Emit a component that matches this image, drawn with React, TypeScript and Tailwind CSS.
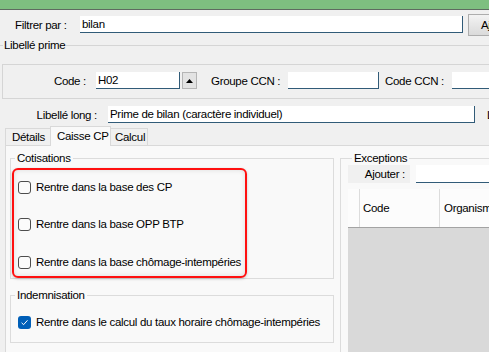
import React from "react";

function Check({ checked }: { checked?: boolean }) {
  if (checked) {
    return (
      <span className="flex h-[13px] w-[13px] shrink-0 items-center justify-center rounded-[3px] bg-[#005fb8]">
        <svg width="9" height="9" viewBox="0 0 9 9">
          <path d="M1.6 4.8 L3.6 6.7 L7.5 2.3" fill="none" stroke="#ffffff" strokeWidth="1" />
        </svg>
      </span>
    );
  }
  return <span className="h-[13px] w-[13px] shrink-0 rounded-[3px] border border-[#4d4d4d] bg-[#fbfbfb]" />;
}

function Field({ w, text }: { w: string; text?: string }) {
  return (
    <div className={`${w} h-[17px] shrink-0 border-b border-r border-[#315b78] bg-white pl-[2px] leading-[16px]`}>
      {text}
    </div>
  );
}

function Row({ label, checked }: { label: string; checked?: boolean }) {
  return (
    <div className="flex h-[14px] items-center gap-[5px]">
      <Check checked={checked} />
      <span className="whitespace-nowrap">{label}</span>
    </div>
  );
}

export default function App() {
  return (
    <div className="flex h-[352px] w-[489px] flex-col overflow-hidden bg-[#f0f0f0] font-['Liberation_Sans',Arial,sans-serif] text-[11.5px] leading-[14px] tracking-[-0.3px] text-black">
      <div className="flex w-[560px] flex-1 flex-col">
        {/* barre verte */}
        <div className="h-[10px] shrink-0 border-b border-[#5f6b60] bg-[#7ebf80]" />

        {/* filtre */}
        <div className="mt-[4px] flex h-[22px] shrink-0">
          <div className="w-[80px] self-center pl-[15px]">Filtrer par :</div>
          <div className="mt-[2px]">
            <Field w="w-[383px]" text="bilan" />
          </div>
          <div className="ml-[5px] h-[22px] w-[70px] border border-[#adadad] bg-gradient-to-b from-[#f3f3f3] to-[#dadada] pl-[12px] leading-[20px]">
            Ajouter
          </div>
        </div>

        {/* Libellé prime */}
        <div className="mt-[2px] flex h-[14px] shrink-0 items-center">
          <span className="h-px w-[3px] bg-[#d5d5d5]" />
          <span className="px-[1px]">Libellé prime</span>
          <span className="h-px flex-1 bg-[#d5d5d5]" />
        </div>

        <div className="ml-[2px] mt-[12px] h-[35px] shrink-0 border border-r-0 border-[#d5d5d5] pt-[7px]">
          <div className="flex items-center">
            <div className="w-[83px] text-right">Code :</div>
            <div className="ml-[10px]">
              <Field w="w-[84px]" text="H02" />
            </div>
            <div className="ml-[2px] flex h-[17px] w-[15px] items-center justify-center border border-[#b5b5b5] bg-[#e3e3e3]">
              <svg width="7" height="4" viewBox="0 0 7 4">
                <path d="M0 4 L3.5 0 L7 4 Z" fill="#000000" />
              </svg>
            </div>
            <div className="ml-[14px] w-[77px] whitespace-nowrap">Groupe CCN :</div>
            <Field w="w-[91px]" />
            <div className="ml-[6px] w-[67px] whitespace-nowrap">Code CCN :</div>
            <Field w="w-[90px]" />
          </div>
        </div>

        {/* Libellé long */}
        <div className="mt-[7px] flex shrink-0 items-center">
          <div className="w-[97px] text-right">Libellé long :</div>
          <div className="ml-[11px]">
            <Field w="w-[367px]" text="Prime de bilan (caractère individuel)" />
          </div>
          <div className="ml-[12px] whitespace-nowrap">Libellé court</div>
        </div>

        {/* onglets */}
        <div className="ml-[5px] mt-[3px] flex h-[19px] shrink-0 items-end">
          <div className="h-[17px] w-[45px] border-l border-t border-[#d9d9d9] pl-[6px] leading-[17px]">Détails</div>
          <div className="relative z-10 -mb-px h-[20px] w-[61px] border-x border-t border-[#d9d9d9] bg-[#f9f9f9] pl-[6px] leading-[19px]">
            Caisse CP
          </div>
          <div className="h-[17px] w-[37px] border-r border-t border-[#d9d9d9] pl-[4px] leading-[17px]">Calcul</div>
        </div>

        {/* panneau */}
        <div className="ml-[5px] flex flex-1 items-start border-l border-t border-[#d9d9d9] bg-[#f9f9f9] pl-[4px] pt-[5px]">
          <div className="flex w-[324px] shrink-0 flex-col">
            <fieldset className="border border-[#dcdcdc] pt-[3px]">
              <legend className="ml-[4px] px-[2px]">Cotisations</legend>
              <div className="ml-[1px] w-[235px] rounded-[6px] border-2 border-[#ff1010] pb-[7px] pl-[4px] pt-[10px] shadow-[inset_0_0_5px_rgba(0,0,0,0.12),0_1px_3px_rgba(0,0,0,0.2)]">
                <Row label="Rentre dans la base des CP" />
                <div className="mt-[23px]">
                  <Row label="Rentre dans la base OPP BTP" />
                </div>
                <div className="mt-[24px]">
                  <Row label="Rentre dans la base chômage-intempéries" />
                </div>
              </div>
            </fieldset>

            <fieldset className="mt-[9px] border border-[#dcdcdc] pb-[13px] pl-[7px] pt-[13px]">
              <legend className="ml-[-3px] px-[2px]">Indemnisation</legend>
              <Row label="Rentre dans le calcul du taux horaire chômage-intempéries" checked />
            </fieldset>
          </div>

          <fieldset className="ml-[6px] w-[210px] shrink-0 border border-[#dcdcdc] pl-[7px]">
            <legend className="ml-[4px] px-[2px]">Exceptions</legend>
            <div className="flex">
              <div className="h-[18px] w-[62px] bg-[#f0f0f0] pr-[5px] text-right leading-[18px]">Ajouter :</div>
              <div className="ml-[6px] h-[18px] w-[150px] border-b border-[#315b78] bg-white" />
            </div>
            <div className="mt-[6px] flex h-[39px] border-b border-[#a3a3a3] bg-[#fcfcfc]">
              <div className="w-[12px] border-r border-[#dcdcdc]" />
              <div className="flex w-[80px] items-center border-r border-[#dcdcdc] pl-[3px]">Code</div>
              <div className="flex items-center pl-[4px]">Organisme</div>
            </div>
            <div className="h-[200px] bg-[#d9d9d9]" />
          </fieldset>
        </div>
      </div>
    </div>
  );
}
